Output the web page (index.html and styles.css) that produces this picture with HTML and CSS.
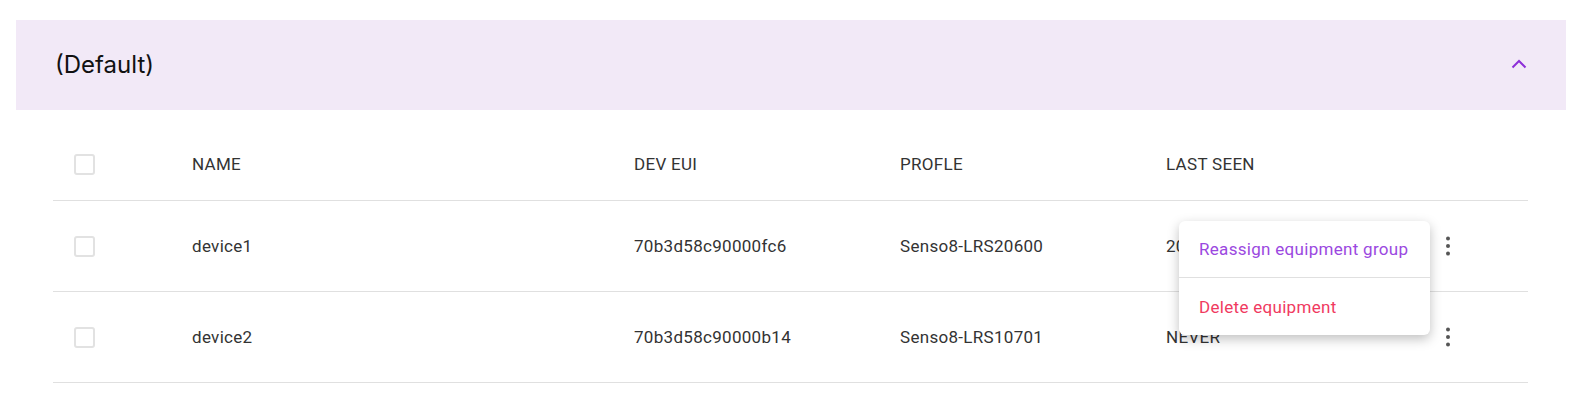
FILE: index.html
```html
<!DOCTYPE html>
<html lang="en">
<head>
    <meta charset="UTF-8">
    <meta name="viewport" content="width=device-width, initial-scale=1.0">
    <title>Equipment groups</title>
    <link rel="stylesheet" href="styles.css">
</head>
<body>

<div class="group">
    <div class="group-header">
        <h2>(Default)</h2>
        <button class="collapse-btn" aria-label="Collapse">
            <svg width="16" height="10" viewBox="0 0 16 10"><polyline points="1.5,8.5 8,2 14.5,8.5" fill="none" stroke="#8d2fd8" stroke-width="2"/></svg>
        </button>
    </div>

    <div class="device-table">
        <div class="row head">
            <span class="check"></span>
            <span>NAME</span>
            <span>DEV EUI</span>
            <span>PROFLE</span>
            <span>LAST SEEN</span>
            <span></span>
        </div>
        <div class="row">
            <span class="check"></span>
            <span>device1</span>
            <span>70b3d58c90000fc6</span>
            <span>Senso8-LRS20600</span>
            <span>2023-11-02 14:21</span>
            <span class="more"><svg width="6" height="20" viewBox="0 0 6 20"><circle cx="3" cy="2.5" r="2"/><circle cx="3" cy="10" r="2"/><circle cx="3" cy="17.5" r="2"/></svg></span>
        </div>
        <div class="row">
            <span class="check"></span>
            <span>device2</span>
            <span>70b3d58c90000b14</span>
            <span>Senso8-LRS10701</span>
            <span>NEVER</span>
            <span class="more"><svg width="6" height="20" viewBox="0 0 6 20"><circle cx="3" cy="2.5" r="2"/><circle cx="3" cy="10" r="2"/><circle cx="3" cy="17.5" r="2"/></svg></span>
        </div>

        <!-- open row menu -->
        <div class="row-menu">
            <div class="menu-item reassign">Reassign equipment group</div>
            <div class="menu-item delete">Delete equipment</div>
        </div>
    </div>
</div>

</body>
</html>
```

FILE: styles.css
```css
body {
    margin: 0;
    font-family: Roboto, "Noto Sans", sans-serif;
    background: #fff;
    color: #333;
}
.group {
    padding: 20px 11px 0 16px;
}
.group-header {
    background: #f2e9f7;
    height: 90px;
    display: flex;
    align-items: center;
    justify-content: space-between;
    padding: 0 37px 0 39px;
}
.group-header h2 {
    margin: 0 0 2px;
    font-family: Inter, sans-serif;
    font-weight: 400;
    font-size: 24px;
    color: #111;
}
.collapse-btn {
    background: none;
    border: none;
    padding: 0;
    width: 16px;
    height: 10px;
    display: flex;
    margin: 0 2px 2px 0;
}
.device-table {
    position: relative;
    margin: 18px 38px 0 37px;
}
.row {
    display: grid;
    grid-template-columns: 118px 442px 266px 266px 1fr 24px;
    align-items: center;
    height: 90px;
    padding: 0 68px 0 21px;
    border-bottom: 1px solid #e0e0e0;
    font-size: 17px;
    letter-spacing: 0.3px;
    color: #333;
}
.row.head {
    height: 72px;
}
.check {
    width: 17px;
    height: 17px;
    border: 2px solid #e2e2e2;
    border-radius: 3px;
}
.more {
    display: flex;
    justify-content: center;
    fill: #555;
}
.row-menu {
    position: absolute;
    left: 1126px;
    top: 93px;
    width: 251px;
    background: #fff;
    border-radius: 6px;
    box-shadow: 0 4px 12px rgba(0,0,0,0.25);
}
.menu-item {
    height: 56px;
    display: flex;
    align-items: center;
    padding: 0 20px;
    font-size: 17px;
    letter-spacing: 0.3px;
}
.reassign {
    color: #9b48df;
    border-bottom: 1px solid #e0e0e0;
}
.delete {
    color: #f03a5f;
    height: 57px;
}
```
